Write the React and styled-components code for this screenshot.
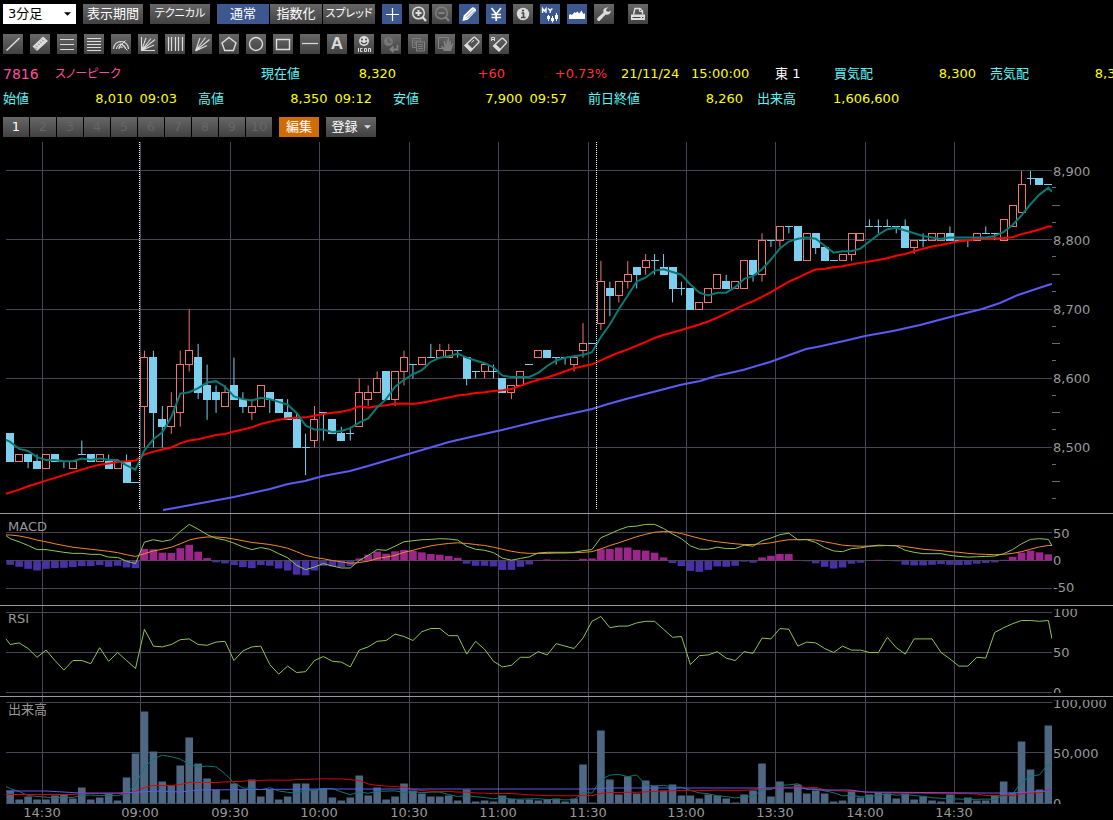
import styled, { createGlobalStyle } from "styled-components";

const GlobalStyle = createGlobalStyle`
  * {
    box-sizing: border-box;
  }

  body {
    margin: 0;
    background-color: #000;
    color: #fff;
    font-family: "DejaVu Sans", "Noto Sans CJK JP", sans-serif;
    font-size: 13px;
    line-height: 16px;
    font-feature-settings: "palt";
  }

  button,
  select {
    font: inherit;
    font-feature-settings: inherit;
  }
`;

const Page = styled.main`
  overflow: hidden;
`;

const Toolbar = styled.div`
  display: flex;
  gap: 7px;
  padding: 4px 3px 0;
  margin-bottom: 10px;
  height: 24px;
`;

const DrawBar = styled(Toolbar)`
  padding-top: 0;
  height: 20px;
  margin-bottom: 7px;
`;

const TabBar = styled(DrawBar)`
  margin-bottom: 3px;
`;

const Group = styled.div`
  display: flex;
  gap: ${(props) => props.$gap || 1}px;
`;

const PeriodBox = styled.label`
  display: grid;
  align-items: center;
  width: 73px;
  height: 20px;
  background-color: #fff;

  & > * {
    grid-area: 1 / 1;
  }

  & > svg {
    justify-self: end;
    margin-right: 5px;
    pointer-events: none;
  }
`;

const PeriodSelect = styled.select`
  appearance: none;
  width: 100%;
  height: 20px;
  padding: 0 5px;
  border: 0;
  background: none;
  color: #000;
`;

const fills = {
  plain: "linear-gradient(#676767, #414141)",
  blue: "#3d588f",
  orange: "#d06c04",
};

const Button = styled.button`
  display: flex;
  align-items: center;
  justify-content: center;
  flex: none;
  gap: 6px;
  width: ${(props) => props.$width || 20}px;
  height: 20px;
  padding: 0;
  border: 0;
  white-space: nowrap;
  background: ${(props) => fills[props.$tone || "plain"]};
  color: ${(props) => (props.disabled ? "#777" : "#fff")};
  cursor: pointer;
`;

const KanaButton = styled(Button)`
  font-size: 11px;
`;

const TabButton = styled(Button)`
  width: 26px;
  color: ${(props) => (props.disabled ? "#666" : "#fff")};
`;

const PrintButton = styled(Button)`
  margin-left: 7px;
`;

const Info = styled.section`
  padding-left: 3px;
  margin-bottom: 6px;
`;

const InfoRow = styled.div`
  display: grid;
  align-items: center;
  height: 25px;
  white-space: nowrap;
  overflow: hidden;
  grid-template-columns: ${(props) => props.$columns};
`;

const tones = {
  cyan: "#5cf5f5",
  yellow: "#ff0",
  red: "#f33",
  white: "#fff",
};

const Cell = styled.span`
  color: ${(props) => tones[props.$tone || "yellow"]};
  padding-right: ${(props) => (props.$end ? 14 : 0)}px;
  text-align: ${(props) => (props.$end ? "right" : "left")};
`;

const StockCode = styled.span`
  color: #ff4f9c;
  font-size: 14px;
`;

const StockName = styled(StockCode)`
  font-size: 12px;
`;

const QuoteBox = styled.span`
  display: flex;
  justify-content: space-between;
  gap: 7px;
  padding-right: ${(props) => (props.$timed ? 21 : 14)}px;
  color: #ff0;
`;

const QuoteLabel = styled.span`
  color: #5cf5f5;
  margin-right: auto;
`;

const Panel = styled.section`
  display: grid;
  grid-template-columns: minmax(0, 1fr) 61px;
  height: ${(props) => props.$height}px;
  border-bottom: ${(props) => (props.$last ? "0" : "1px solid #999")};
  color: #999;
  overflow: hidden;
`;

const PlotArea = styled.div`
  display: grid;
  min-width: 0;

  & > * {
    grid-area: 1 / 1;
  }
`;

const PlotTitle = styled.h2`
  margin: 5px 8px;
  font-size: 13px;
  font-weight: normal;
`;

const PlotSvg = styled.svg`
  display: block;
  width: 100%;
  height: 100%;

  & polyline {
    fill: none;
    vector-effect: non-scaling-stroke;
  }
`;

const Axis = styled.div`
  display: grid;
  align-items: start;

  & > * {
    grid-area: 1 / 1;
  }
`;

const Scale = styled.ul`
  list-style: none;
  margin: 0;
  padding: ${(props) => props.$top}px 0 0 1px;

  & > li {
    height: ${(props) => props.$step}px;
  }
`;

// end labels of a scale run into the neighbouring panel and are cut there
const ClippedAxis = styled.div`
  height: ${(props) => props.$height}px;
  margin-top: 3px;
  overflow: hidden;

  & > ul {
    margin-top: -4px;
  }
`;

const TimeAxis = styled.div`
  display: grid;
  height: 16px;
  line-height: 18px;
  margin-right: 61px;
  color: #999;
  grid-template-columns: 42fr 98fr 90fr 89fr 90fr 89fr 90fr 98fr 89fr 90fr 89fr 98fr;
`;

const TimeLabel = styled.span`
  display: flex;
  justify-content: center;
  width: 0;

  &:first-child {
    grid-column: 2;
  }
`;

/* ---------- data ---------- */

// open, high, low, close in ticks of 10 yen above 8,500
const candles = [
  [2, 2, -2, -2], [-2, -1, -2, -1], [-1, -1, -3, -2], [-2, -1, -3, -3],
  [-3, -1, -3, -1], [-1, -1, -2, -2], [-2, -2, -3, -2], [-3, -2, -3, -2],
  [-1, 1, -1, -1], [-1, -1, -2, -2], [-2, -1, -2, -1], [-2, -1, -3, -3],
  [-3, -2, -3, -2], [-2, -1, -5, -5], [-5, -5, -5, -5], [6, 14, 0, 13],
  [13, 14, 0, 5], [4, 6, 0, 3], [3, 8, 2, 6], [5, 14, 3, 12],
  [12, 20, 11, 14], [13, 15, 7, 8], [9, 12, 4, 7], [8, 9, 5, 7],
  [6, 9, 6, 8], [9, 13, 7, 7], [7, 8, 5, 6], [5, 7, 4, 6],
  [6, 9, 6, 9], [8, 8, 5, 7], [7, 7, 5, 5], [5, 7, 4, 4],
  [4, 5, 0, 0], [0, 2, -4, 0], [1, 6, 0, 4], [5, 5, 1, 5],
  [4, 4, 2, 2], [2, 3, 1, 1], [2, 3, 1, 2], [3, 10, 3, 8],
  [7, 9, 6, 8], [8, 11, 8, 10], [11, 11, 7, 7], [7, 11, 6, 11],
  [11, 14, 9, 13], [12, 12, 10, 12], [12, 13, 12, 13], [13, 15, 13, 13],
  [13, 15, 13, 14], [13, 15, 13, 14], [14, 14, 13, 14], [13, 13, 9, 10],
  [11, 11, 10, 11], [11, 12, 10, 12], [11, 12, 10, 11], [10, 10, 8, 8],
  [8, 9, 7, 9], [9, 11, 9, 11], [12, 12, 12, 12], [13, 14, 13, 14],
  [14, 14, 13, 13], [13, 13, 12, 13], [13, 13, 12, 13], [12, 13, 11, 13],
  [14, 18, 13, 15], [15, 15, 15, 15], [18, 27, 17, 24], [23, 24, 19, 22],
  [22, 24, 21, 24], [24, 27, 23, 25], [26, 26, 23, 25], [26, 28, 25, 27],
  [27, 28, 25, 27], [26, 28, 25, 25], [26, 26, 21, 23], [23, 24, 22, 23],
  [23, 23, 20, 20], [20, 21, 20, 21], [21, 23, 21, 23], [23, 25, 23, 25],
  [24, 25, 23, 23], [23, 24, 23, 24], [23, 27, 23, 27], [27, 27, 24, 25],
  [25, 31, 24, 30], [30, 30, 29, 30], [30, 32, 29, 32], [32, 32, 31, 32],
  [32, 32, 27, 27], [27, 31, 27, 31], [31, 31, 28, 29], [29, 29, 27, 27],
  [27, 27, 27, 27], [27, 28, 27, 28], [28, 31, 27, 31], [30, 31, 30, 31],
  [32, 33, 32, 32], [32, 33, 31, 32], [32, 33, 32, 32], [32, 32, 31, 32],
  [32, 33, 29, 29], [29, 30, 28, 30], [30, 31, 29, 30], [30, 31, 30, 31],
  [30, 31, 30, 31], [31, 32, 30, 30], [30, 30, 30, 30], [30, 30, 29, 30],
  [30, 31, 30, 31], [31, 32, 31, 31], [31, 31, 30, 31], [30, 33, 30, 33],
  [32, 35, 32, 35], [34, 40, 34, 38], [39, 40, 38, 39], [39, 39, 38, 38],
  [38, 38, 38, 38],
];

// averages that reach back before the first candle
const lead5 = [0.8, -0.2, -0.5, -1.4];
const lead25 = [
  -6.5, -6.1, -5.6, -5.2, -4.8, -4.4, -4, -3.6, -3.2, -2.8, -2.5, -2.3, -2.1,
  -2, -1.9, -1, -0.6, -0.3, 0, 0.6, 1, 1.2, 1.5, 1.8,
];

const slowAverage =
  "163,370 180,367 207,362 234,357 252,353 270,349 288,344 305,341 323,336 350,331 368,326 395,318 422,310 449,302 475,296 502,290 547,279 592,269 608,264 626,259 653,252 680,245 700,241 716,236 743,230 770,222 806,209 817,207 844,201 865,196 893,191 920,185 954,176 982,169 1000,163 1018,155 1048,145 1052,144";

// 81 steps are 50 on the scale
const macd = [
  64, 55, 44, 32, 32, 28, 24, 21, 21, 18, 18, 10, 9, -2, -9, 54, 61, 56, 61,
  85, 106, 92, 76, 65, 60, 51, 40, 32, 38, 33, 20, 8, -14, -27, -19, -9, -16,
  -22, -22, 0, 15, 32, 30, 42, 55, 58, 61, 62, 64, 63, 60, 42, 33, 30, 23, 7,
  1, 6, 11, 22, 24, 24, 24, 24, 29, 32, 67, 78, 90, 99, 101, 106, 106, 94, 78,
  64, 43, 33, 33, 39, 35, 35, 45, 42, 58, 66, 76, 80, 61, 61, 53, 38, 28, 26,
  35, 37, 42, 45, 44, 43, 30, 24, 20, 20, 20, 15, 12, 10, 11, 12, 13, 20, 32,
  49, 62, 64, 62,
];

const signal = [
  75, 72, 67, 60, 55, 49, 44, 39, 36, 33, 30, 27, 23, 17, 12, 20, 28, 33, 39,
  49, 60, 66, 69, 69, 67, 63, 58, 53, 50, 47, 42, 36, 26, 15, 9, 5, 0, -4, -8,
  -6, -2, 6, 10, 15, 24, 30, 37, 43, 47, 50, 52, 50, 47, 44, 39, 33, 27, 23,
  21, 21, 21, 22, 22, 23, 24, 26, 34, 44, 52, 61, 70, 77, 83, 85, 84, 79, 72,
  65, 59, 55, 52, 49, 47, 47, 49, 52, 57, 61, 61, 62, 60, 55, 50, 45, 43, 42,
  42, 43, 44, 44, 41, 37, 33, 31, 29, 26, 24, 21, 19, 18, 17, 18, 21, 26, 33,
  40, 44,
];

const rsi = [
  60, 62, 55, 44, 53, 40, 28, 40, 40, 36, 56, 39, 50, 40, 30, 79, 58, 57, 60,
  66, 67, 60, 59, 63, 64, 40, 52, 57, 58, 35, 23, 33, 25, 26, 40, 45, 39, 38,
  32, 53, 57, 64, 65, 73, 70, 65, 76, 80, 80, 71, 71, 48, 64, 54, 39, 32, 34,
  44, 44, 51, 47, 61, 58, 55, 68, 89, 95, 81, 83, 83, 87, 89, 89, 79, 69, 70,
  35, 46, 47, 51, 43, 40, 51, 49, 68, 67, 80, 79, 58, 63, 62, 55, 50, 58, 53,
  53, 50, 50, 69, 56, 48, 67, 67, 67, 50, 42, 33, 33, 44, 43, 75, 81, 86, 90,
  90, 89, 90,
];

// thousands of shares
const volumes = [
  13, 4, 7, 4, 4, 8, 9, 5, 16, 4, 6, 10, 3, 26, 50, 92, 52, 22, 18, 38, 66, 40,
  25, 14, 4, 20, 14, 24, 7, 14, 4, 7, 20, 20, 14, 15, 6, 3, 6, 28, 8, 16, 4, 7,
  20, 13, 10, 7, 7, 8, 3, 14, 2, 3, 2, 8, 5, 4, 4, 3, 4, 5, 2, 5, 39, 1, 73,
  24, 9, 27, 10, 23, 18, 13, 19, 8, 8, 5, 9, 8, 5, 1, 9, 13, 40, 7, 22, 11, 19,
  10, 13, 10, 2, 3, 13, 6, 9, 11, 10, 5, 10, 4, 7, 3, 2, 9, 1, 6, 3, 3, 8, 22,
  11, 62, 34, 14, 78,
];

const volumeLead5 = [15, 12, 8, 7];
const volumeLead25 = [
  9, 9, 9, 9, 9, 9, 9, 9, 10, 10, 10, 10, 10, 10, 12, 16, 18, 18, 18, 19, 21,
  21, 21, 21,
];

const volumeSlow =
  "6,94 46,94 80,96 118,96 140,95 160,94 180,95 200,93 320,92 590,92 610,91 765,91 800,91 820,93 850,93 865,95 980,96 1012,96 1030,95 1048,94 1052,92";

const gridTimes = [42, 140, 230, 319, 409, 498, 588, 686, 775, 865, 954];
const timeLabels = [
  "14:30", "09:00", "09:30", "10:00", "10:30", "11:00", "11:30", "13:00",
  "13:30", "14:00", "14:30",
];

/* ---------- scales ---------- */

const STEP = 8.95;
const xAt = (i) => 10.2 + i * STEP;
const priceY = (tick) => 307.5 - tick * 6.91;
const macdY = (value) => 45.5 - value / 3;
const rsiY = (value) => 86.5 - value * 0.8;
const volumeY = (value) => 106.5 - value;

const average = (values, size, lead) =>
  values.map((_, i) =>
    i < size - 1
      ? lead[i]
      : values.slice(i - size + 1, i + 1).reduce((a, b) => a + b, 0) / size
  );

const toPoints = (values, scale, first, last) => {
  const points = values.map((v, i) => `${xAt(i)},${scale(v)}`);
  points.unshift(`6,${scale(first ?? values[0])}`);
  points.push(`1052,${scale(last ?? values[values.length - 1])}`);
  return points.join(" ");
};

/* ---------- chart parts ---------- */

const Grid = ({ rows, height, top = 0 }) => (
  <g stroke="#444655" shapeRendering="crispEdges">
    {rows.map((y) => (
      <line key={y} x1="6" x2="1052" y1={y} y2={y} />
    ))}
    {gridTimes.map((x) => (
      <line key={x} x1={x + 0.5} x2={x + 0.5} y1={top} y2={height} />
    ))}
  </g>
);

const Plot = ({ height, label, children }) => (
  <PlotSvg
    viewBox={`0 0 1052 ${height}`}
    preserveAspectRatio="none"
    role="img"
    aria-label={label}
  >
    {children}
  </PlotSvg>
);

const Candle = ({ index, candle }) => {
  const [open, high, low, close] = candle;
  const up = close > open;
  const color = up ? "#f07575" : "#7ccfee";
  const cx = xAt(index);
  const left = Math.round(cx - 4);
  const top = Math.round(priceY(Math.max(open, close)) - 0.5);
  const bottom = Math.round(priceY(Math.min(open, close)) - 0.5);
  return (
    <g stroke={color}>
      {high > Math.max(open, close) && (
        <line x1={cx} x2={cx} y1={priceY(high)} y2={top} />
      )}
      {low < Math.min(open, close) && (
        <line x1={cx} x2={cx} y1={bottom} y2={priceY(low)} />
      )}
      {open === close ? (
        <line x1={left} x2={left + 8} y1={top + 0.5} y2={top + 0.5} />
      ) : (
        <rect
          x={left + 0.5}
          y={top + 0.5}
          width="7"
          height={bottom - top}
          fill={up ? "none" : color}
        />
      )}
    </g>
  );
};

const PricePlot = () => {
  const closes = candles.map((c) => c[3]);
  return (
    <Plot height={373} label="株価">
      <Grid rows={[30.5, 99.5, 169.5, 238.5, 307.5]} top={2} height={373} />
      {candles.map((candle, i) => (
        <Candle key={i} index={i} candle={candle} />
      ))}
      <polyline points={slowAverage} stroke="#5b5bf5" strokeWidth="2" />
      <polyline
        points={toPoints(average(closes, 25, lead25), priceY, -6.7)}
        stroke="#f00"
        strokeWidth="2"
      />
      <polyline
        points={toPoints(average(closes, 5, lead5), priceY, 1.1, 37)}
        stroke="#087a76"
        strokeWidth="2"
      />
      <g stroke="#fff" strokeDasharray="1 1" shapeRendering="crispEdges">
        <line x1="139.5" x2="139.5" y1="2" y2="370" />
        <line x1="596.5" x2="596.5" y1="2" y2="370" />
      </g>
    </Plot>
  );
};

const MacdPlot = () => (
  <Plot height={91} label="MACD">
    <Grid rows={[18.5, 45.5, 72.5]} height={91} />
    {macd.map((value, i) => {
      const size = (value - signal[i]) / 3;
      return (
        <rect
          key={i}
          x={xAt(i) - 3.8}
          width="7.6"
          y={size > 0 ? 45.5 - size : 46}
          height={Math.abs(size)}
          fill={size > 0 ? "#9d268c" : "#4930a4"}
        />
      );
    })}
    <polyline points={toPoints(signal, macdY)} stroke="#f28a28" />
    <polyline points={toPoints(macd, macdY, 73, 43)} stroke="#8cc65a" />
  </Plot>
);

const RsiPlot = () => (
  <Plot height={90} label="RSI">
    <Grid rows={[6.5, 46.5, 86.5]} height={90} />
    <polyline points={toPoints(rsi, rsiY, 67, 67)} stroke="#8cc65a" />
  </Plot>
);

const VolumePlot = () => (
  <Plot height={107} label="出来高">
    <Grid rows={[5.5, 55.5, 106.5]} height={107} />
    {volumes.map((value, i) => (
      <rect
        key={i}
        x={xAt(i) - 3.8}
        width="7.6"
        y={volumeY(value)}
        height={value}
        fill="#4e6883"
      />
    ))}
    <polyline
      points={toPoints(average(volumes, 5, volumeLead5), volumeY, 17, 36)}
      stroke="#087a76"
    />
    <polyline
      points={toPoints(average(volumes, 25, volumeLead25), volumeY)}
      stroke="#e00000"
    />
    <polyline points={volumeSlow} stroke="#5b5bf5" />
  </Plot>
);

const PriceTicks = () => (
  <svg width="10" height="373" stroke="#666a78" shapeRendering="crispEdges">
    {Array.from({ length: 20 }, (_, i) => {
      const y = Math.round(30 + i * 17.28) + 0.5;
      return i % 4 === 0 ? null : (
        <line key={i} x1="0" x2={i % 4 === 2 ? 8 : 4} y1={y} y2={y} />
      );
    })}
  </svg>
);

/* ---------- icons ---------- */

const icons = {
  cross: <path d="M10.5 4v13M4 10.5h13" stroke="#fff" />,
  zoomIn: (
    <>
      <circle cx="9.5" cy="9" r="5.8" strokeWidth="1.5" />
      <path d="M6.5 9h6M9.5 6v6" strokeWidth="2" />
      <path d="M13.5 13l3.5 4" strokeWidth="2.2" />
    </>
  ),
  zoomOut: (
    <>
      <circle cx="9.5" cy="9" r="5.8" strokeWidth="1.5" />
      <path d="M6.5 9h6" strokeWidth="2" />
      <path d="M13.5 13l3.5 4" strokeWidth="2.2" />
    </>
  ),
  pencil: (
    <>
      <path
        d="M3.5 17l1.2-5.500 8.300-8q1.200-.8 2.400.2l1.200 1.200q1 1.200 0 2.400L8.700 15.800z"
        fill="#fff"
        stroke="none"
      />
      <path
        d="M7 12.500L14 5.500M8.500 14L15.500 7"
        stroke="#3d588f"
        strokeWidth=".7"
      />
    </>
  ),
  yen: (
    <path
      d="M5.5 4l4.700 6 4.700-6M10.2 10v7M5.5 10.5h9.500M5.5 13.5h9.500"
      stroke="#fff"
      strokeWidth="1.7"
    />
  ),
  info: (
    <>
      <circle cx="10" cy="10" r="6.2" fill="#ddd" stroke="none" />
      <path d="M8.5 9h2v4.500M8 13.5h4.500" stroke="#444" strokeWidth="1.6" />
      <circle cx="10" cy="6.5" r="1.1" fill="#444" stroke="none" />
    </>
  ),
  my: (
    <>
      <path
        d="M2.500 9V4.500l1.800 2.500L6 4.500V9M8 4.500l2.200 2 2.200-2M10.200 6.500V9"
        stroke="#fff"
        strokeWidth="1.3"
      />
      <path d="M8.500 11v6M12.500 12v6.500M16.500 9v8" stroke="#fff" strokeWidth="1" />
      <path
        d="M7 12h3v3H7zM11 14h3v3h-3zM15 11h3v4h-3z"
        fill="#fff"
        stroke="none"
      />
    </>
  ),
  area: (
    <path
      d="M2 15v-4l1.500-1 1 1 1.500-1 1.500-2 1 1 2-1.500 1.500 2 1-1 1.500-2 1.500 3 1 .5 1-1V15z"
      fill="#fff"
      stroke="none"
    />
  ),
  wrench: (
    <path
      d="M16.800 6.500l-2.600 1.600-1.900-1.100-.1-2.100L14.500 3.500q-3-.5-4.600 1.600-1 1.500-.4 3.400L3.500 14q-1 1.300 0 2.500 1.200 1 2.500 0l5.500-6q2 .6 3.800-.6 1.700-1.300 1.500-3.400z"
      fill="#ddd"
      stroke="none"
    />
  ),
  print: (
    <>
      <path d="M5.500 10.500L7 4.500h5l2.500 2.500v3.500" strokeWidth="1.4" />
      <path d="M11.500 4.500v3h3" strokeWidth="1" />
      <path d="M3 10.500h14V16H3z" fill="#ddd" stroke="none" />
      <path d="M4.500 13.500h8M14 13.500h1.500" stroke="#444" strokeWidth="1" />
    </>
  ),
  line: <path d="M3.500 16.500L16.500 4" strokeWidth="1.5" />,
  ruler: (
    <>
      <path d="M2.500 12.500L13 2.500l5 4.500L7 17z" fill="#ddd" stroke="none" />
      <path
        d="M6 11.500l1.500 1.500M8 9.500l1.500 1.500M10 7.500l1.500 1.500M12 5.500l1.500 1.500M5 13.500l2 2"
        stroke="#555"
        strokeWidth=".8"
      />
    </>
  ),
  lines3: <path d="M3 5.500h14M3 10.500h14M3 15.500h14" />,
  lines5: <path d="M3 4.500h14M3 7.500h14M3 10.500h14M3 13.500h14M3 16.500h14" />,
  gauge: (
    <>
      <path d="M2.500 15a7.500 7.500 0 0 1 15 0M5.500 15a4.500 4.500 0 0 1 9 0M8 15a2 2 0 0 1 3.500-1.500" />
      <path d="M9 8.500L16.500 16.500M7.500 13.500l7-7" strokeWidth="1" />
    </>
  ),
  fanAxis: (
    <path
      d="M3.500 3v13.500H17M3.500 16.500L8 4M3.500 16.500L13 4.500M3.500 16.500L17 5.500M3.500 16.500L16 11"
      strokeWidth="1.1"
    />
  ),
  bars: <path d="M3.500 3v14M6.500 3v14M10.500 3v14M13.500 3v14M17.500 3v14" />,
  fan: (
    <path
      d="M3.500 17L8 4M3.500 17L13.500 3.500M3.500 17L17.500 5.500M3.500 17L15 11.500"
      strokeWidth="1.1"
    />
  ),
  pentagon: <path d="M10 3.500l7 5.500-2.700 7.500H5.700L3 9z" strokeWidth="1.4" />,
  circle: <circle cx="10" cy="10" r="6.5" strokeWidth="1.4" />,
  rect: <path d="M3.500 5.500h13v10h-13z" strokeWidth="1.4" />,
  hline: <path d="M2 9.500h16" />,
  smile: (
    <>
      <circle cx="10" cy="7" r="5" fill="#ddd" stroke="none" />
      <circle cx="8" cy="5.500" r=".9" fill="#444" stroke="none" />
      <circle cx="12" cy="5.500" r=".9" fill="#444" stroke="none" />
      <path d="M7 8q3 3.500 6 0" stroke="#444" />
      <path
        d="M4.500 14v4M8.500 14.500H6.500v3h2M10.500 14.500h2v3h-2zM14.500 18v-3.500h2V18"
        strokeWidth="1"
      />
    </>
  ),
  history: (
    <>
      <circle cx="7.500" cy="7.500" r="4.500" fill="#777" stroke="none" />
      <path d="M7.500 4.500v3.500h3" stroke="#555" />
      <path d="M16.500 11v4.500H10M12.500 12.500L9.500 15.500l3 2.500" strokeWidth="1.8" />
    </>
  ),
  copy: (
    <>
      <path d="M4.500 4.500h8v9h-8z" strokeWidth="1" />
      <path d="M6 7h5M6 9h3M6 11h3" strokeWidth="1" />
      <path d="M8.500 8h8v9h-8z" fill="#555" strokeWidth="1" />
      <path d="M10 10.500h5M10 12.500h5M10 14.500h5" strokeWidth="1" />
    </>
  ),
  hand: (
    <>
      <path d="M3.500 3.500h10v11h-10z" strokeWidth="1" />
      <path
        d="M9 17l-3-4.500 1-.8 2.500 1.800L8.500 7l1.300-.3L11.500 11l.2-5.500h1.500L13.500 11l1.500-4.500 1.300.3-.8 5L17.500 9l1 .7-2.500 7.300z"
        fill="#808080"
        stroke="none"
      />
    </>
  ),
  eraser: (
    <>
      <path
        d="M3 11.500l8.500-8q.8-.7 1.600 0l3.600 3.500q.7.800 0 1.500L8.500 17z"
        strokeWidth="1.3"
      />
      <path d="M3 11.500l2-1.800 5.500 5.300-2 2z" fill="#ddd" strokeWidth="1" />
      <path d="M9.500 8.500l2.500-2.500" strokeWidth="1" />
    </>
  ),
  eraserAll: (
    <>
      <path
        d="M4.500 12l8-7.500q.8-.7 1.600 0l3.100 3q.7.800 0 1.500L10 17z"
        strokeWidth="1.3"
      />
      <path d="M4.500 12l1.800-1.700 5.400 5-1.700 1.700z" fill="#ddd" strokeWidth="1" />
      <path d="M2.500 7V3.500h3V7M2.500 5.500h3" strokeWidth="1" />
    </>
  ),
};

const Icon = ({ name, dim }) => (
  <svg
    width="20"
    height="20"
    viewBox="0 0 20 20"
    fill="none"
    stroke={dim ? "#808080" : "#ddd"}
    strokeWidth="1.2"
    aria-hidden="true"
  >
    {icons[name]}
  </svg>
);

const Caret = ({ color }) => (
  <svg width="7" height="4" viewBox="0 0 8 4" aria-hidden="true">
    <path d="M0 0h8L4 4z" fill={color} />
  </svg>
);

const LetterA = styled.span`
  font-family: "Liberation Sans", sans-serif;
  font-size: 17px;
  font-weight: bold;
  color: #ddd;
`;

const IconButton = ({ icon, label, tone, disabled }) => (
  <Button aria-label={label} $tone={tone} disabled={disabled}>
    <Icon name={icon} dim={disabled} />
  </Button>
);

const drawTools = [
  ["line", "トレンドライン"],
  ["ruler", "定規"],
  ["lines3", "平行線"],
  ["lines5", "リトレースメント"],
  ["gauge", "アーク"],
  ["fanAxis", "ファン"],
  ["bars", "タイムゾーン"],
  ["fan", "スピードライン"],
  ["pentagon", "五角形"],
  ["circle", "円"],
  ["rect", "四角形"],
  ["hline", "水平線"],
  ["text", "テキスト"],
  ["smile", "アイコン"],
  ["history", "元に戻す", true],
  ["copy", "コピー", true],
  ["hand", "移動", true],
  ["eraser", "消去"],
  ["eraserAll", "全消去"],
];

const Quote = ({ label, value, time }) => (
  <QuoteBox $timed={Boolean(time)}>
    <QuoteLabel>{label}</QuoteLabel>
    <span>{value}</span>
    {time && <span>{time}</span>}
  </QuoteBox>
);

const ScaleList = ({ labels, top, step }) => (
  <Scale $top={top} $step={step}>
    {labels.map((label) => (
      <li key={label}>{label}</li>
    ))}
  </Scale>
);

export default function App() {
  return (
    <Page>
      <GlobalStyle />
      <Toolbar>
        <PeriodBox>
          <PeriodSelect aria-label="足種" defaultValue="3分足">
            <option>1分足</option>
            <option>3分足</option>
            <option>5分足</option>
          </PeriodSelect>
          <Caret color="#000" />
        </PeriodBox>
        <Button $width={60}>表示期間</Button>
        <KanaButton $width={60}>テクニカル</KanaButton>
        <Group>
          <Button $width={52} $tone="blue">通常</Button>
          <Button $width={52}>指数化</Button>
          <KanaButton $width={52}>スプレッド</KanaButton>
        </Group>
        <IconButton icon="cross" label="十字線" tone="blue" />
        <Group $gap={3}>
          <IconButton icon="zoomIn" label="拡大" />
          <IconButton icon="zoomOut" label="縮小" disabled />
        </Group>
        <IconButton icon="pencil" label="描画" tone="blue" />
        <IconButton icon="yen" label="注文" tone="blue" />
        <IconButton icon="info" label="情報" />
        <IconButton icon="my" label="マイチャート" tone="blue" />
        <IconButton icon="area" label="出来高表示" tone="blue" />
        <IconButton icon="wrench" label="設定" />
        <PrintButton aria-label="印刷">
          <Icon name="print" />
        </PrintButton>
      </Toolbar>
      <DrawBar>
        {drawTools.map(([icon, label, disabled]) =>
          icon === "text" ? (
            <Button key={icon} aria-label={label}>
              <LetterA>A</LetterA>
            </Button>
          ) : (
            <IconButton key={icon} icon={icon} label={label} disabled={disabled} />
          )
        )}
      </DrawBar>
      <Info>
        <InfoRow $columns="52px 206px 149px 109px 102px 70px 84px 59px 156px 156px">
          <StockCode>7816</StockCode>
          <StockName>スノーピーク</StockName>
          <Quote label="現在値" value="8,320" />
          <Cell $tone="red" $end>+60</Cell>
          <Cell $tone="red" $end>+0.73%</Cell>
          <Cell>21/11/24</Cell>
          <Cell>15:00:00</Cell>
          <Cell $tone="white">東 1</Cell>
          <Quote label="買気配" value="8,300" />
          <Quote label="売気配" value="8,310" />
        </InfoRow>
        <InfoRow $columns="195px 195px 195px 169px 76px auto">
          <Quote label="始値" value="8,010" time="09:03" />
          <Quote label="高値" value="8,350" time="09:12" />
          <Quote label="安値" value="7,900" time="09:57" />
          <Quote label="前日終値" value="8,260" />
          <Cell $tone="cyan">出来高</Cell>
          <Cell>1,606,600</Cell>
        </InfoRow>
      </Info>
      <TabBar>
        <Group>
          {[1, 2, 3, 4, 5, 6, 7, 8, 9, 10].map((n) => (
            <TabButton key={n} disabled={n > 1}>{n}</TabButton>
          ))}
        </Group>
        <Button $width={40} $tone="orange">編集</Button>
        <Button $width={50}>
          登録
          <Caret color="#ddd" />
        </Button>
      </TabBar>
      <Panel $height={374}>
        <PlotArea>
          <PricePlot />
        </PlotArea>
        <Axis>
          <PriceTicks />
          <ScaleList
            labels={["8,900", "8,800", "8,700", "8,600", "8,500"]}
            top={24}
            step={69}
          />
        </Axis>
      </Panel>
      <Panel $height={92}>
        <PlotArea>
          <MacdPlot />
          <PlotTitle>MACD</PlotTitle>
        </PlotArea>
        <ScaleList labels={["50", "0", "-50"]} top={12} step={27} />
      </Panel>
      <Panel $height={91}>
        <PlotArea>
          <RsiPlot />
          <PlotTitle>RSI</PlotTitle>
        </PlotArea>
        <ClippedAxis $height={84}>
          <ScaleList labels={["100", "50", "0"]} top={0} step={40} />
        </ClippedAxis>
      </Panel>
      <Panel $height={107} $last>
        <PlotArea>
          <VolumePlot />
          <PlotTitle>出来高</PlotTitle>
        </PlotArea>
        <ClippedAxis $height={104}>
          <ScaleList labels={["100,000", "50,000", "0"]} top={0} step={50} />
        </ClippedAxis>
      </Panel>
      <TimeAxis>
        {timeLabels.map((label, i) => (
          <TimeLabel key={i}>{label}</TimeLabel>
        ))}
      </TimeAxis>
    </Page>
  );
}
